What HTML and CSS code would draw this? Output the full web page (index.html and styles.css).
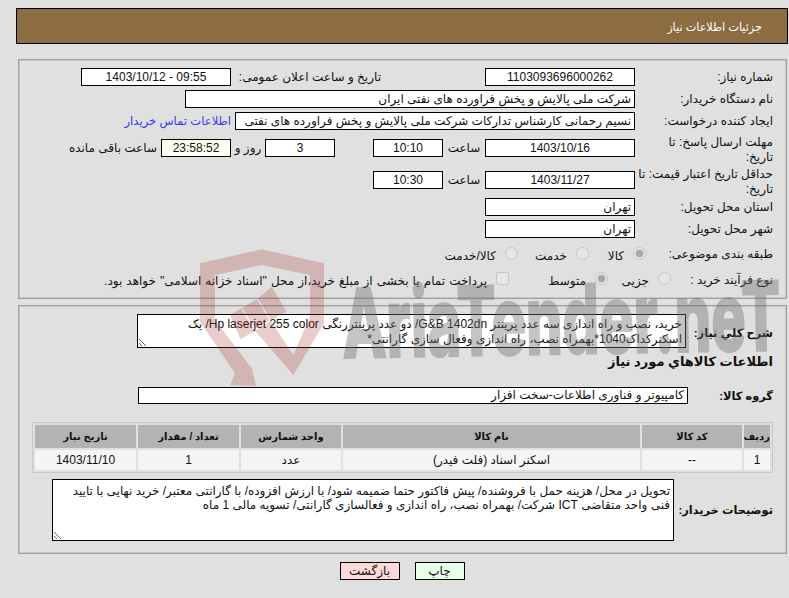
FILE: index.html
```html
<!DOCTYPE html>
<html lang="fa" dir="rtl">
<head>
<meta charset="utf-8">
<title>جزئیات اطلاعات نیاز</title>
<link rel="stylesheet" href="styles.css">
</head>
<body>
<header class="title-bar"><span>جزئیات اطلاعات نیاز</span></header>

<section class="panel panel-info">
  <div class="row row-std">
    <div class="label">شماره نیاز:</div>
    <div class="box box-m center">1103093696000262</div>
    <div class="label-date">تاریخ و ساعت اعلان عمومی:</div>
    <div class="box box-m center ltr">1403/10/12 - 09:55</div>
  </div>
  <div class="row row-std">
    <div class="label">نام دستگاه خریدار:</div>
    <div class="box box-xl">شرکت ملی پالایش و پخش فراورده های نفتی ایران</div>
  </div>
  <div class="row row-tall-a">
    <div class="label">ایجاد کننده درخواست:</div>
    <div class="box box-l">نسیم رحمانی کارشناس تدارکات شرکت ملی پالایش و پخش فراورده های نفتی</div>
    <a class="contact" href="#">اطلاعات تماس خریدار</a>
  </div>
  <div class="row row-tall-b">
    <div class="label label-two">مهلت ارسال پاسخ: تا<br>تاریخ:</div>
    <div class="box box-m center">1403/10/16</div>
    <div class="word word-hour">ساعت</div>
    <div class="box box-s center">10:10</div>
    <div class="spacer-a"></div>
    <div class="box box-s center">3</div>
    <div class="word word-day">روز و</div>
    <div class="box box-s center box-ivory">23:58:52</div>
    <div class="word word-left">ساعت باقی مانده</div>
  </div>
  <div class="row row-tall-c">
    <div class="label label-two">حداقل تاریخ اعتبار قیمت: تا<br>تاریخ:</div>
    <div class="box box-m center">1403/11/27</div>
    <div class="word word-hour">ساعت</div>
    <div class="box box-s center">10:30</div>
  </div>
  <div class="row row-std">
    <div class="label">استان محل تحویل:</div>
    <div class="box box-m">تهران</div>
  </div>
  <div class="row row-radio-a">
    <div class="label">شهر محل تحویل:</div>
    <div class="box box-m">تهران</div>
  </div>
  <div class="row row-radio-b">
    <div class="label">طبقه بندی موضوعی:</div>
    <div class="options options-a">
      <label class="opt opt-kala"><input class="radio" type="radio" name="cat" checked disabled><span>کالا</span></label>
      <label class="opt opt-service"><input class="radio" type="radio" name="cat" disabled><span>خدمت</span></label>
      <label class="opt"><input class="radio" type="radio" name="cat" disabled><span>کالا/خدمت</span></label>
    </div>
  </div>
  <div class="row row-radio-c">
    <div class="label">نوع فرآیند خرید :</div>
    <div class="options options-b">
      <label class="opt opt-small"><input class="radio" type="radio" name="proc" disabled><span>جزیی</span></label>
      <label class="opt opt-mid"><input class="radio" type="radio" name="proc" checked disabled><span>متوسط</span></label>
      <label class="opt opt-long"><input class="check" type="checkbox" disabled><span>پرداخت تمام یا بخشی از مبلغ خرید،از محل "اسناد خزانه اسلامی" خواهد بود.</span></label>
    </div>
  </div>
</section>

<section class="panel panel-goods">
  <div class="row row-desc">
    <div class="label-bold label-desc">شرح کلي نیاز:</div>
    <textarea class="area area-desc" readonly>خرید، نصب و راه اندازی سه عدد پرینتر G&amp;B 1402dn/ دو عدد پرینتررنگی Hp laserjet 255 color/ یک اسکنرکداک1040*بهمراه نصب، راه اندازی وفعال سازی گارانتی*</textarea>
  </div>
  <h2 class="goods-title">اطلاعات كالاهاي مورد نياز</h2>
  <div class="row row-group">
    <div class="label-bold label-group">گروه کالا:</div>
    <div class="box box-group">کامپیوتر و فناوری اطلاعات-سخت افزار</div>
  </div>
  <table class="goods">
    <thead>
      <tr>
        <th class="c-idx">ردیف</th>
        <th class="c-code">کد کالا</th>
        <th class="c-name">نام کالا</th>
        <th class="c-unit">واحد شمارش</th>
        <th class="c-qty">تعداد / مقدار</th>
        <th class="c-date">تاریخ نیاز</th>
      </tr>
    </thead>
    <tbody>
      <tr>
        <td>1</td>
        <td>--</td>
        <td>اسکنر اسناد (فلت فیدر)</td>
        <td>عدد</td>
        <td>1</td>
        <td>1403/11/10</td>
      </tr>
    </tbody>
  </table>
  <div class="row row-notes">
    <div class="label-bold label-notes">توضیحات خریدار:</div>
    <textarea class="area area-notes" readonly>تحویل در محل/ هزینه حمل با فروشنده/ پیش فاکتور حتما ضمیمه شود/ با ارزش افزوده/ با گارانتی معتبر/ خرید نهایی با تایید فنی واحد متقاضی ICT شرکت/ بهمراه نصب، راه اندازی و فعالسازی گارانتی/ تسویه مالی 1 ماه</textarea>
  </div>
</section>

<div class="actions">
  <button class="btn btn-print" type="button">چاپ</button>
  <button class="btn btn-back" type="button">بازگشت</button>
</div>

<svg class="wm-shield" viewBox="0 0 600 660" aria-hidden="true">
  <path d="M60 70 L245 28 L432 70 L432 250 L340 405 L225 272 L272 243 L340 345 L390 230 L390 105 L245 75 L105 105 L105 240 L215 385 L228 438 L150 436 L165 400 L60 245 Z"/>
  <polygon points="150,225 183,205 225,272 182,298"/>
  <polygon points="187,203 230,177 268,240 225,266"/>
  <polygon points="234,175 275,140 320,215 272,240"/>
</svg>
<svg class="wm-text" viewBox="0 0 450 80" aria-hidden="true">
  <text transform="rotate(-1 225 40) translate(0 76) scale(.6 1)">AriaTender.neT</text>
</svg>
</body>
</html>
```
FILE: styles.css
```css
html, body { height: 100%; }
body {
  margin: 0;
  padding: 8px 1px 0 16px;
  box-sizing: border-box;
  background: #e0e0e0;
  color: #111;
  font: 12px/16px "Liberation Sans", "DejaVu Sans", sans-serif;
  direction: rtl;
  position: relative;
  overflow: hidden;
}
.title-bar {
  height: 36px;
  box-sizing: border-box;
  border: 1px solid #000;
  background: #8c6d42;
  color: #fff;
  padding: 10px 25px 0 0;
  font-size: 11.25px;
}
.panel {
  margin: 0 1px 0 2px;
  border: 1px solid #a0a0a0;
  box-shadow: inset 0 0 0 1px #c4c4c4;
  padding: 0 13px 0 0;
}
.panel-info { margin-top: 15px; height: 240px; box-sizing: border-box; padding-top: 8px; }
.panel-goods { margin-top: 6px; height: 249px; box-sizing: border-box; padding-top: 8px; }

.row { display: flex; align-items: flex-start; }
.row-std { height: 22px; }
.row-tall-a { height: 27px; }
.row-tall-b { height: 32px; }
.row-tall-c { height: 27px; }
.row-radio-a { height: 26px; }
.row-radio-b { height: 26px; }
.row-radio-c { height: 26px; }
.row-desc { height: 40px; }
.row-group { height: 33px; margin-bottom: 10px; align-items: center; }
.row-notes { height: 62px; margin-top: 6px; align-items: center; }

.label { flex: 0 0 138px; box-sizing: border-box; padding: 1px 0 0 0; line-height: 16px; }
.label-two { padding: 0; margin-top: -4px; line-height: 15px; white-space: nowrap; }
.row-radio-b .label, .row-radio-c .label { padding-top: 0; }
.label-date { flex: 0 0 150px; margin-right: 104px; padding-top: 1px; box-sizing: border-box; }
.label-bold { font-weight: 700; font-size: 11.4px; white-space: nowrap; min-width: 0; }
.label-desc { flex: 0 0 87px; align-self: center; margin-top: -2px; }
.label-group { flex: 0 0 85px; }
.label-notes { flex: 0 0 99px; }

.box {
  box-sizing: border-box;
  height: 18px;
  border: 1px solid #000;
  background: #fff;
  padding: 0 3px;
  line-height: 16px;
  white-space: nowrap;
  overflow: hidden;
}
.center { text-align: center; }
.ltr { direction: ltr; }
.box-m { flex: 0 0 150px; }
.box-s { flex: 0 0 70px; }
.box-xl { flex: 0 0 450px; }
.box-l { flex: 0 0 400px; }
.box-ivory { background: #fffff2; }
.box-group { flex: 0 0 550px; height: 17px; line-height: 15px; }

.word { padding-top: 1px; box-sizing: border-box; }
.word-hour { flex: 0 0 42px; text-align: center; }
.word-day { flex: 0 0 34px; text-align: center; }
.word-left { margin-right: 4px; }
.spacer-a { flex: 0 0 38px; }
.contact { margin-right: 4px; color: #3a3af0; font-size: 11.6px; text-decoration: none; padding-top: 1px; white-space: nowrap; }

.options { display: flex; }
.options-a { padding-top: 1px; margin-right: -11px; }
.options-b { margin-right: -36px; }
.opt { display: flex; align-items: flex-start; white-space: nowrap; }
.opt span { margin: 1px 9px 0 0; }
.opt-kala { flex: 0 0 57px; }
.opt-service { flex: 0 0 71px; }
.opt-small { flex: 0 0 63px; }
.opt-mid { flex: 0 0 99px; }
.opt-long span { word-spacing: .75px; }

.radio, .check {
  appearance: none;
  margin: 0;
  flex: none;
  width: 13px;
  height: 13px;
  background: #e6e6e6;
  border: 1px solid #c6c6c6;
  box-sizing: border-box;
}
.radio { border-radius: 50%; }
.radio:checked { background: radial-gradient(circle, #a8a8a8 0 3.5px, #e6e6e6 4.2px); }
.check { border-radius: 2px; }

.area {
  display: block;
  flex: none;
  box-sizing: border-box;
  border: 1px solid #000;
  background: #fff;
  color: #111;
  font: inherit;
  padding: 2px 3px;
  margin: 0;
  resize: both;
  overflow: hidden;
  direction: rtl;
  outline: none;
}
.area-desc { width: 549px; height: 34px; line-height: 15px; }
.area-notes { width: 622px; height: 62px; line-height: 14px; padding-top: 4px; }

.goods-title { margin: 0; font-size: 13px; font-weight: 700; line-height: 16px; height: 25px; }

.goods {
  width: 741px;
  margin: 0;
  border: 1px solid #c8c8c8;
  border-spacing: 2px;
  table-layout: fixed;
  text-align: center;
}
.goods th {
  height: 23px;
  padding: 0;
  background: #b3b3b3;
  font-size: 10px;
  font-weight: 700;
}
.goods td { height: 20px; padding: 0; background: #f5f5f5; }
.c-idx { width: 26px; }
.c-code { width: 100px; }
.c-name { width: 297px; }
.c-unit { width: 100px; }
.c-qty { width: 101px; }
.c-date { width: 101px; }

.actions { display: flex; justify-content: center; gap: 15px; margin-top: 8px; }
.btn {
  box-sizing: border-box;
  height: 18px;
  padding: 0;
  margin: 0;
  border: 1px solid #000;
  font: inherit;
  line-height: 14px;
  color: #111;
}
.btn-print { width: 50px; background: #e8ffe8; }
.btn-back { width: 60px; background: #ffd9d9; }

.wm-shield, .wm-text { position: absolute; pointer-events: none; overflow: visible; direction: ltr; }
.wm-shield { left: 180px; top: 240px; width: 200px; height: 220px; fill: rgba(165, 40, 40, .24); }
.wm-text { left: 342px; top: 278px; width: 450px; height: 80px; opacity: .4; }
.wm-text text {
  font-family: Inter, "Open Sans", sans-serif;
  font-weight: 800;
  font-size: 96px;
  fill: #6e6e6e;
  stroke: #6e6e6e;
  stroke-width: 2px;
}
```
